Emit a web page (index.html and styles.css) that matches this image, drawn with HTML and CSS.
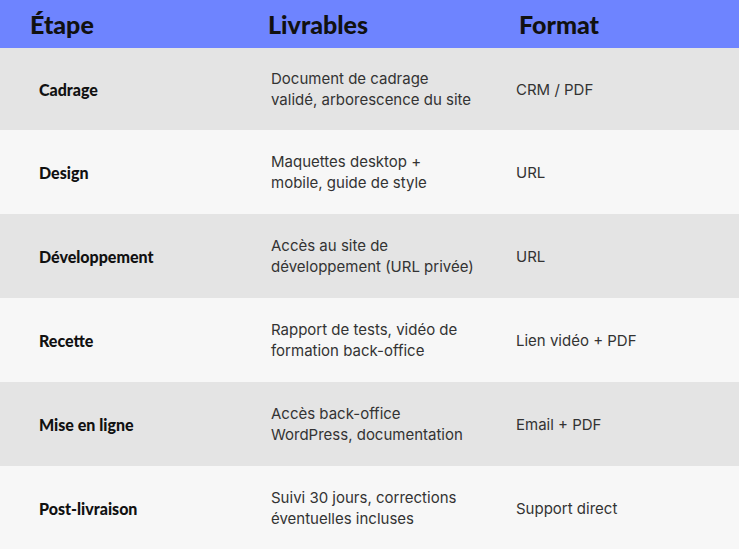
FILE: index.html
```html
<!DOCTYPE html>
<html lang="fr">
<head>
<meta charset="utf-8">
<link rel="stylesheet" href="styles.css">
</head>
<body>
<div class="table">
  <div class="row head">
    <div class="c1">Étape</div>
    <div class="c2">Livrables</div>
    <div class="c3">Format</div>
  </div>
  <div class="row dark">
    <div class="c1">Cadrage</div>
    <div class="c2">Document de cadrage<br>validé, arborescence du site</div>
    <div class="c3">CRM / PDF</div>
  </div>
  <div class="row light">
    <div class="c1">Design</div>
    <div class="c2">Maquettes desktop +<br>mobile, guide de style</div>
    <div class="c3">URL</div>
  </div>
  <div class="row dark">
    <div class="c1">Développement</div>
    <div class="c2">Accès au site de<br>développement (URL privée)</div>
    <div class="c3">URL</div>
  </div>
  <div class="row light">
    <div class="c1">Recette</div>
    <div class="c2">Rapport de tests, vidéo de<br>formation back-office</div>
    <div class="c3">Lien vidéo + PDF</div>
  </div>
  <div class="row dark">
    <div class="c1">Mise en ligne</div>
    <div class="c2">Accès back-office<br>WordPress, documentation</div>
    <div class="c3">Email + PDF</div>
  </div>
  <div class="row light">
    <div class="c1">Post-livraison</div>
    <div class="c2">Suivi 30 jours, corrections<br>éventuelles incluses</div>
    <div class="c3">Support direct</div>
  </div>
</div>
</body>
</html>
```

FILE: styles.css
```css
* { box-sizing: border-box; }
html, body { margin: 0; padding: 0; background: #f7f7f7; }
.table { width: 739px; }
.row {
  display: grid;
  grid-template-columns: 255px 245px 1fr;
  align-items: center;
  font-family: Inter, "Liberation Sans", sans-serif;
  font-size: 15px;
  line-height: 21px;
  color: #333;
  padding: 21px 0;
}
.row.dark { background: #e4e4e4; }
.row.light { background: #f7f7f7; }
.row.dark:nth-child(2) { padding: 20px 0; }
.row .c1 {
  padding-left: 39px;
  font-family: Lato, "DejaVu Sans", sans-serif;
  font-weight: 900;
  font-size: 16px;
  color: #111;
}
.row .c2 { padding-left: 16px; }
.row .c3 { padding-left: 16px; }
.row.head {
  background: #6e84ff;
  height: 48px;
  padding: 0;
  font-family: Lato, "DejaVu Sans", sans-serif;
  font-weight: 900;
  font-size: 25px;
  color: #111;
}
.row.head .c1 { padding-left: 30px; font-size: 25px; }
.row.head .c2 { padding-left: 13px; }
.row.head .c3 { padding-left: 19px; }
```
